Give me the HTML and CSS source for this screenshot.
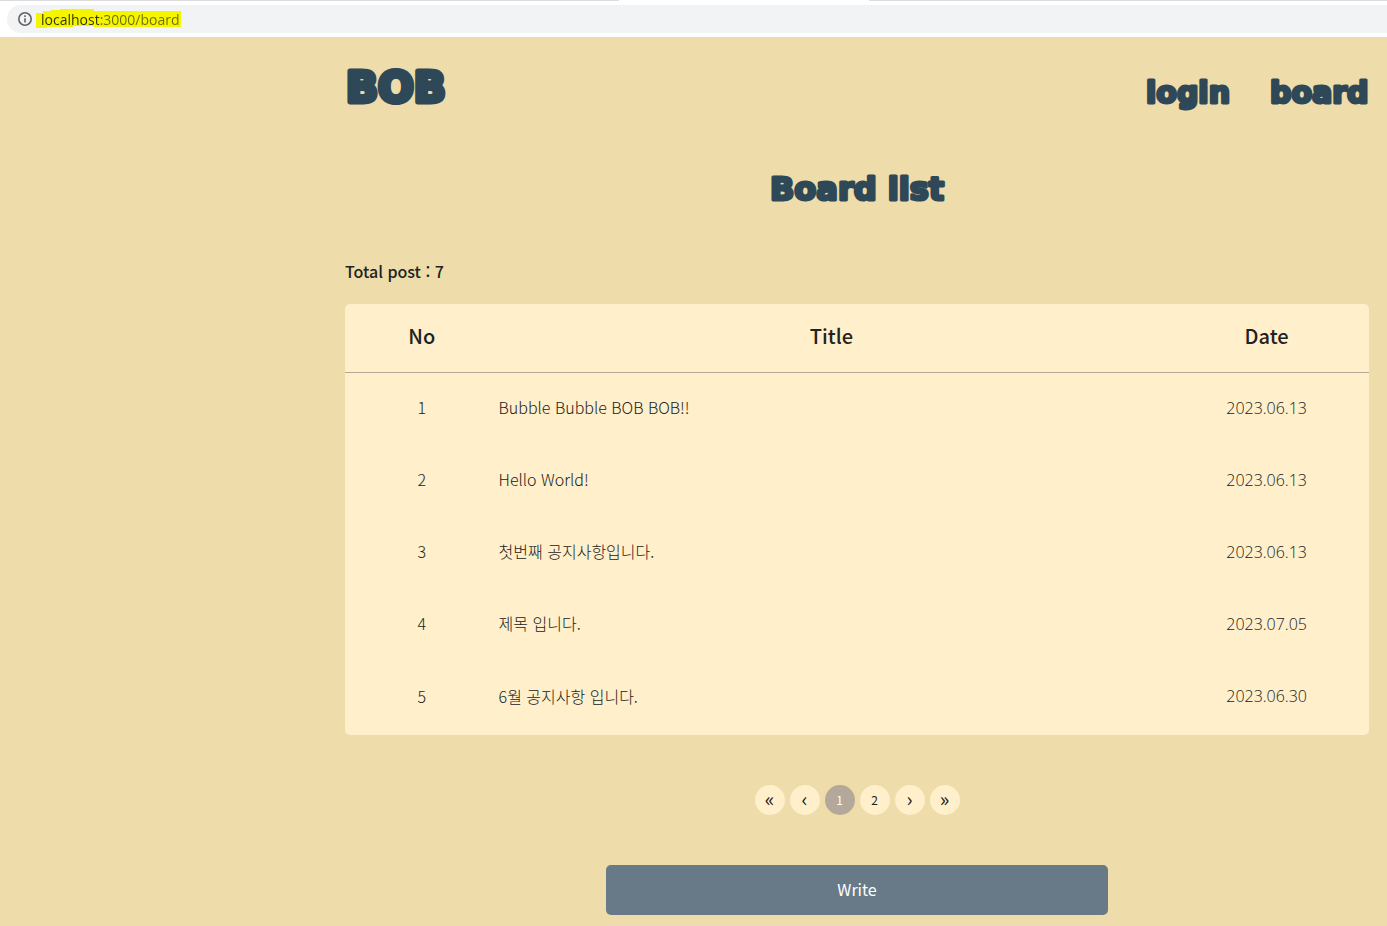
FILE: index.html
```html
<!DOCTYPE html>
<html lang="ko">
  <head>
    <meta charset="UTF-8" />
    <meta name="viewport" content="width=device-width, initial-scale=1.0" />
    <title>BOB - Board</title>
    <link rel="stylesheet" href="styles.css">
  </head>
  <body>
    <div class="browser-bar">
      <div class="tab-line"><span></span><span></span></div>
      <div class="address">
        <svg class="info" viewBox="0 0 16 16" aria-hidden="true">
          <circle cx="8" cy="8" r="6.2" />
          <path d="M8 7.2v4.3M8 4.3v1.7" />
        </svg>
        <div class="url-box">
          <svg class="marker" viewBox="0 0 146 20" aria-hidden="true">
            <path d="M0 4h7V2h8V1h9V0h34v2h87v16h-87v-1H37v1H11v1H0z" />
          </svg>
          <input class="url" type="text" aria-label="Address" value="localhost:3000/board" />
        </div>
      </div>
    </div>

    <div class="container">
      <header>
        <a class="logo" href="#"><svg width="98" height="40"><text x="1" y="35">BOB</text></svg></a>
        <nav>
          <a href="#"><svg width="84" height="40"><text x="0" y="36">login</text></svg></a>
          <a href="#"><svg width="99" height="40"><text x="0" y="36">board</text></svg></a>
        </nav>
      </header>

      <main>
        <h1><svg width="100%" height="56"><text x="50%" y="40">Board list</text></svg></h1>
        <p class="total">Total post : 7</p>
        <table>
          <thead>
            <tr>
              <th class="no">No</th>
              <th>Title</th>
              <th class="date">Date</th>
            </tr>
          </thead>
          <tbody>
            <tr>
              <td>1</td>
              <td class="title">Bubble Bubble BOB BOB!!</td>
              <td class="day">2023.06.13</td>
            </tr>
            <tr>
              <td>2</td>
              <td class="title">Hello World!</td>
              <td class="day">2023.06.13</td>
            </tr>
            <tr>
              <td>3</td>
              <td class="title">첫번째 공지사항입니다.</td>
              <td class="day">2023.06.13</td>
            </tr>
            <tr>
              <td>4</td>
              <td class="title">제목 입니다.</td>
              <td class="day">2023.07.05</td>
            </tr>
            <tr>
              <td>5</td>
              <td class="title">6월 공지사항 입니다.</td>
              <td class="day">2023.06.30</td>
            </tr>
          </tbody>
        </table>

        <div class="pagination">
          <button class="arrow">«</button>
          <button class="arrow">‹</button>
          <button class="active">1</button>
          <button>2</button>
          <button class="arrow">›</button>
          <button class="arrow">»</button>
        </div>

        <button class="write">Write</button>
      </main>
    </div>
  </body>
</html>
```
FILE: styles.css
```css
* {
  box-sizing: border-box;
}
body {
  margin: 0;
  background-color: #eedcaa;
  color: #222;
  font-family: "Noto Sans CJK KR", sans-serif;
  font-size: 16px;
}
a {
  color: inherit;
  text-decoration: none;
}
button {
  border: none;
  padding: 0;
  font-family: inherit;
  cursor: pointer;
}

/* browser bar */
.browser-bar {
  height: 38px;
  background-color: white;
  border-bottom: 1px solid #dadce0;
}
.tab-line {
  display: flex;
  justify-content: space-between;
}
.tab-line span {
  height: 1px;
  width: 619px;
  background-color: #dadce0;
}
.tab-line span:last-child {
  width: 518px;
}
.address {
  display: flex;
  align-items: center;
  height: 28px;
  margin: 4px 0 0 7px;
  padding-left: 10px;
  border-radius: 14px 0 0 14px;
  background-color: #f1f3f4;
}
.info {
  width: 16px;
  height: 16px;
  fill: none;
  stroke: #5f6368;
  stroke-width: 1.6;
}
.url-box {
  position: relative;
  margin-left: 3px;
  width: 300px;
  height: 20px;
}
.marker {
  position: absolute;
  top: 0;
  left: 0;
  width: 146px;
  height: 20px;
  fill: #f5f500;
}
.url {
  position: relative;
  display: block;
  width: 300px;
  height: 20px;
  padding: 0 0 0 5px;
  border: none;
  background: linear-gradient(to right, #333300 63px, #707000 63px);
  -webkit-background-clip: text;
  background-clip: text;
  color: transparent;
  font-family: "Open Sans", sans-serif;
  font-size: 14px;
}

/* page */
.container {
  margin: 0 18px 0 345px;
}
header {
  display: flex;
  justify-content: space-between;
  align-items: center;
  height: 98px;
}
/* bubble lettering */
header svg,
h1 svg {
  display: block;
  overflow: visible;
  fill: #2f4858;
  stroke: #2f4858;
  stroke-width: 3px;
  stroke-linejoin: round;
  font-family: "DejaVu Sans", sans-serif;
  font-weight: 700;
}
.logo svg {
  font-size: 42px;
  stroke-width: 5px;
}
nav {
  display: flex;
  gap: 40px;
  font-size: 30px;
}
h1 {
  margin: 24px 0 43px;
  font-size: 32px;
}
h1 text {
  text-anchor: middle;
}
.total {
  margin: 0 0 21px;
  line-height: 24px;
  font-weight: 500;
}
table {
  width: 100%;
  border-collapse: collapse;
  border-radius: 5px;
  background-color: #ffefca;
}
th {
  height: 68px;
  padding: 0 0 4px;
  border-bottom: 1px solid #b3a899;
  font-size: 20px;
  font-weight: 500;
}
.no {
  width: 15%;
}
.date {
  width: 20%;
}
td {
  height: 72px;
  padding: 0 0 2px;
  text-align: center;
  font-weight: 300;
}
tbody tr:last-child td {
  height: 75px;
  padding-bottom: 4px;
}
.title {
  text-align: left;
}
.day {
  padding-bottom: 0;
  font-family: "Open Sans", sans-serif;
}
.pagination {
  display: flex;
  justify-content: center;
  gap: 5px;
  margin: 50px 0;
}
.pagination button {
  width: 30px;
  height: 30px;
  padding-bottom: 2px;
  border-radius: 50%;
  background-color: #ffefca;
  color: #222;
  font-size: 12px;
}
.pagination .arrow {
  font-size: 20px;
  line-height: 20px;
}
.pagination .active {
  background-color: #b3a899;
  color: white;
}
.write {
  display: block;
  width: 49%;
  height: 50px;
  margin: 0 auto 11px;
  padding-bottom: 2px;
  border-radius: 5px;
  background-color: #687987;
  color: white;
  font-size: 16px;
}
```
